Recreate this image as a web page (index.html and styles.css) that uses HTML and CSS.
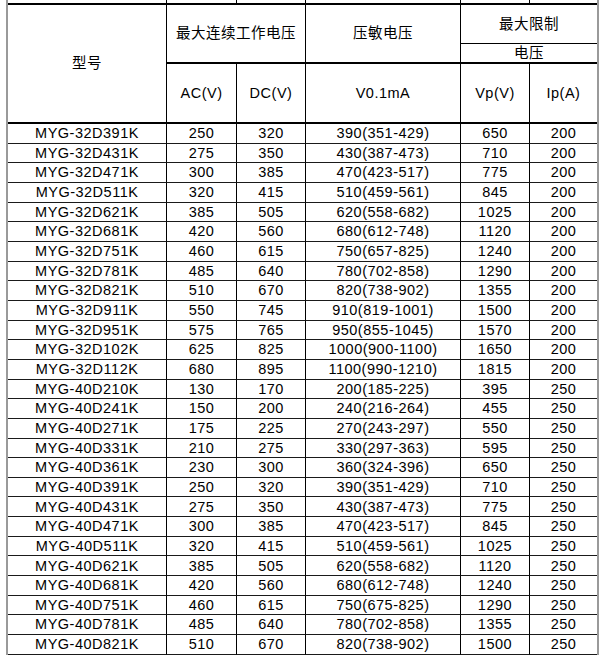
FILE: index.html
```html
<!DOCTYPE html>
<html lang="zh-CN">
<head>
<meta charset="utf-8">
<title>压敏电阻参数表</title>
<link rel="stylesheet" href="styles.css">
</head>
<body>
<div class="sheet">
  <div class="c strip"></div><div class="c strip"></div><div class="c strip"></div><div class="c strip"></div><div class="c strip"></div><div class="c e strip"></div>

  <div class="c h model">型号</div>
  <div class="c h cont">最大连续工作电压</div>
  <div class="c h varis">压敏电压</div>
  <div class="c e h limit">最大限制</div>
  <div class="c e h limit2">电压</div>
  <div class="c h sub">AC(V)</div>
  <div class="c h sub">DC(V)</div>
  <div class="c h sub">V0.1mA</div>
  <div class="c h sub">Vp(V)</div>
  <div class="c e h sub">Ip(A)</div>

  <div class="c">MYG-32D391K</div><div class="c">250</div><div class="c">320</div><div class="c">390(351-429)</div><div class="c">650</div><div class="c e">200</div>
  <div class="c">MYG-32D431K</div><div class="c">275</div><div class="c">350</div><div class="c">430(387-473)</div><div class="c">710</div><div class="c e">200</div>
  <div class="c">MYG-32D471K</div><div class="c">300</div><div class="c">385</div><div class="c">470(423-517)</div><div class="c">775</div><div class="c e">200</div>
  <div class="c">MYG-32D511K</div><div class="c">320</div><div class="c">415</div><div class="c">510(459-561)</div><div class="c">845</div><div class="c e">200</div>
  <div class="c">MYG-32D621K</div><div class="c">385</div><div class="c">505</div><div class="c">620(558-682)</div><div class="c">1025</div><div class="c e">200</div>
  <div class="c">MYG-32D681K</div><div class="c">420</div><div class="c">560</div><div class="c">680(612-748)</div><div class="c">1120</div><div class="c e">200</div>
  <div class="c">MYG-32D751K</div><div class="c">460</div><div class="c">615</div><div class="c">750(657-825)</div><div class="c">1240</div><div class="c e">200</div>
  <div class="c">MYG-32D781K</div><div class="c">485</div><div class="c">640</div><div class="c">780(702-858)</div><div class="c">1290</div><div class="c e">200</div>
  <div class="c">MYG-32D821K</div><div class="c">510</div><div class="c">670</div><div class="c">820(738-902)</div><div class="c">1355</div><div class="c e">200</div>
  <div class="c">MYG-32D911K</div><div class="c">550</div><div class="c">745</div><div class="c">910(819-1001)</div><div class="c">1500</div><div class="c e">200</div>
  <div class="c">MYG-32D951K</div><div class="c">575</div><div class="c">765</div><div class="c">950(855-1045)</div><div class="c">1570</div><div class="c e">200</div>
  <div class="c">MYG-32D102K</div><div class="c">625</div><div class="c">825</div><div class="c">1000(900-1100)</div><div class="c">1650</div><div class="c e">200</div>
  <div class="c">MYG-32D112K</div><div class="c">680</div><div class="c">895</div><div class="c">1100(990-1210)</div><div class="c">1815</div><div class="c e">200</div>
  <div class="c">MYG-40D210K</div><div class="c">130</div><div class="c">170</div><div class="c">200(185-225)</div><div class="c">395</div><div class="c e">250</div>
  <div class="c">MYG-40D241K</div><div class="c">150</div><div class="c">200</div><div class="c">240(216-264)</div><div class="c">455</div><div class="c e">250</div>
  <div class="c">MYG-40D271K</div><div class="c">175</div><div class="c">225</div><div class="c">270(243-297)</div><div class="c">550</div><div class="c e">250</div>
  <div class="c">MYG-40D331K</div><div class="c">210</div><div class="c">275</div><div class="c">330(297-363)</div><div class="c">595</div><div class="c e">250</div>
  <div class="c">MYG-40D361K</div><div class="c">230</div><div class="c">300</div><div class="c">360(324-396)</div><div class="c">650</div><div class="c e">250</div>
  <div class="c">MYG-40D391K</div><div class="c">250</div><div class="c">320</div><div class="c">390(351-429)</div><div class="c">710</div><div class="c e">250</div>
  <div class="c">MYG-40D431K</div><div class="c">275</div><div class="c">350</div><div class="c">430(387-473)</div><div class="c">775</div><div class="c e">250</div>
  <div class="c">MYG-40D471K</div><div class="c">300</div><div class="c">385</div><div class="c">470(423-517)</div><div class="c">845</div><div class="c e">250</div>
  <div class="c">MYG-40D511K</div><div class="c">320</div><div class="c">415</div><div class="c">510(459-561)</div><div class="c">1025</div><div class="c e">250</div>
  <div class="c">MYG-40D621K</div><div class="c">385</div><div class="c">505</div><div class="c">620(558-682)</div><div class="c">1120</div><div class="c e">250</div>
  <div class="c">MYG-40D681K</div><div class="c">420</div><div class="c">560</div><div class="c">680(612-748)</div><div class="c">1240</div><div class="c e">250</div>
  <div class="c">MYG-40D751K</div><div class="c">460</div><div class="c">615</div><div class="c">750(675-825)</div><div class="c">1290</div><div class="c e">250</div>
  <div class="c">MYG-40D781K</div><div class="c">485</div><div class="c">640</div><div class="c">780(702-858)</div><div class="c">1355</div><div class="c e">250</div>
  <div class="c">MYG-40D821K</div><div class="c">510</div><div class="c">670</div><div class="c">820(738-902)</div><div class="c">1500</div><div class="c e">250</div>
</div>
</body>
</html>
```
FILE: styles.css
```css
html, body {
  margin: 0;
  padding: 0;
  background: #fff;
}

.sheet {
  margin-left: 6px;
  width: 589px;
  display: grid;
  grid-template-columns: 159px 70px 69px 155px 69px 67px;
  grid-template-rows: 5px 39px 20px 60px repeat(27, 19.67px);
  border-left: 2px solid #9a9a9a;
  border-right: 2px solid #9a9a9a;
  font-family: "Liberation Sans", Arial, "Noto Sans CJK SC", sans-serif;
  font-size: 14.5px;
  letter-spacing: 0.5px;
  color: #000;
}

.c {
  box-sizing: border-box;
  border-right: 1px solid #000;
  border-bottom: 1px solid #1a1a1a;
  display: flex;
  align-items: center;
  justify-content: center;
  white-space: nowrap;
  line-height: 1;
  overflow: hidden;
}

.e {
  border-right: none;
}

.strip {
  border-bottom: 2px solid #000;
}

.h {
  font-family: "Liberation Sans", Arial, "Noto Sans CJK SC", sans-serif;
  border-bottom: 2px solid #000;
}

.model {
  grid-column: 1;
  grid-row: 2 / span 3;
}

.cont {
  grid-column: 2 / span 2;
  grid-row: 2 / span 2;
}

.varis {
  grid-column: 4;
  grid-row: 2 / span 2;
}

.limit {
  grid-column: 5 / span 2;
  grid-row: 2;
  border-bottom: 1px solid #000;
}

.limit2 {
  grid-column: 5 / span 2;
  grid-row: 3;
}
```
